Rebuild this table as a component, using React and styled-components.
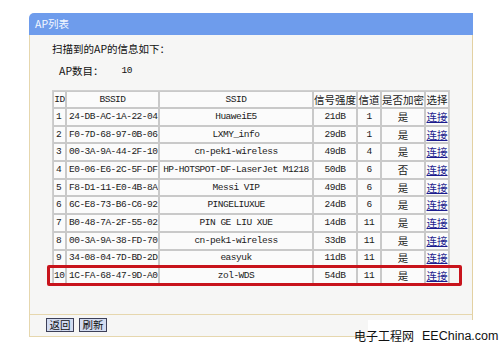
import React from "react";
import styled, { createGlobalStyle } from "styled-components";

const Global = createGlobalStyle`
  html, body { margin: 0; padding: 0; background: #ffffff; }
  body { width: 500px; height: 349px; overflow: hidden; }
`;

const CJK = `"Noto Sans CJK SC", "Noto Sans", sans-serif`;
const MONO = `"Liberation Mono", "Noto Sans CJK SC", monospace`;

const Page = styled.div`
  position: relative;
  width: 500px;
  height: 349px;
  padding: 13px 0 0 29px;
  box-sizing: border-box;
`;

const Panel = styled.div`
  width: 444px;
`;

const Header = styled.div`
  height: 22px;
  line-height: 22px;
  background: #6e9cec;
  color: #f4f8ff;
  font-family: ${CJK};
  font-size: 10.5px;
  padding-left: 6px;
  border-radius: 5px 0 0 0;
`;

const Body = styled.div`
  background: #f6f6f5;
  border-left: 1px solid #e6d7ae;
  border-right: 1px solid #e3d1a2;
  padding: 7px 0 28px 22px;
`;

const Line = styled.div`
  font-family: ${CJK};
  font-size: 10.5px;
  line-height: 14px;
  color: #111;
  padding-left: ${(p) => p.$indent || 0}px;
  margin-top: ${(p) => p.$top || 0}px;
  display: flex;
`;

const Count = styled.span`
  margin-left: 18px;
  font-family: ${MONO};
  font-size: 9.5px;
  letter-spacing: -0.5px;
`;

const TableWrap = styled.div`
  position: relative;
  margin-top: 12px;
  width: 396px;
`;

const Table = styled.table`
  width: 396px;
  table-layout: fixed;
  border-collapse: separate;
  border-spacing: 0;
  border: 1px solid #cfcfcf;
  background: #fbfbfb;
  box-sizing: border-box;
`;

const Th = styled.th`
  height: 15px;
  padding: 0;
  border: 1px solid #c9c9c9;
  font-family: ${(p) => (p.$mono ? MONO : CJK)};
  font-size: ${(p) => (p.$mono ? "9.5px" : "10.5px")};
  letter-spacing: ${(p) => (p.$mono ? "-0.5px" : "0")};
  font-weight: normal;
  color: #1a1a1a;
  text-align: center;
  white-space: nowrap;
  overflow: hidden;
`;

const Tr = styled.tr`
  height: 17.7px;
`;

const Td = styled.td`
  padding: 0 0 0 ${(p) => p.$pad || 0}px;
  border: 1px solid #c9c9c9;
  font-family: ${(p) => (p.$mono ? MONO : CJK)};
  font-size: ${(p) => (p.$mono ? "9.5px" : "10.5px")};
  letter-spacing: ${(p) => (p.$mono ? "-0.5px" : "0")};
  color: #1a1a1a;
  text-align: ${(p) => (p.$pad !== undefined ? "left" : "center")};
  white-space: nowrap;
  overflow: hidden;
  line-height: 14px;
`;

const Link = styled.a`
  color: #1c1c8e;
  text-decoration: underline;
  font-family: ${CJK};
  font-size: 10.5px;
`;

const Highlight = styled.div`
  position: absolute;
  left: -5px;
  top: 175px;
  width: 415px;
  height: 21px;
  border: 3px solid #c8141c;
  border-radius: 2px;
  box-sizing: border-box;
  pointer-events: none;
`;

const Footer = styled.div`
  display: flex;
  gap: 5px;
  align-items: center;
  height: 21px;
  padding-left: 16px;
  background: #f6f6f5;
  border-top: 1px solid #e6d7ae;
  border-bottom: 1px solid #e6d7ae;
  border-left: 1px solid #e6d7ae;
  border-right: 1px solid #e3d1a2;
`;

const Button = styled.button`
  height: 14px;
  width: 28px;
  padding: 0;
  background: #d3dcf1;
  border: 1px solid #3d4058;
  font-family: ${CJK};
  font-size: 10.5px;
  line-height: 12px;
  color: #111;
  display: flex;
  align-items: center;
  justify-content: center;
`;

const Watermark = styled.div`
  position: absolute;
  left: 354px;
  top: 329px;
  font-family: "Noto Sans CJK SC", "Liberation Sans", sans-serif;
  font-size: 12px;
  line-height: 14px;
  color: #111;
  white-space: nowrap;
  display: flex;
  gap: 8px;
`;

const Latin = styled.span`
  font-family: "Liberation Sans", sans-serif;
  font-size: 12.5px;
`;

const Patch = styled.div`
  position: absolute;
  left: ${(p) => p.$x}px;
  top: ${(p) => p.$y}px;
  width: ${(p) => p.$w}px;
  height: ${(p) => p.$h}px;
  background: #ffffff;
`;

const rows = [
  ["1", "24-DB-AC-1A-22-04", "HuaweiE5", "21dB", "1", "是"],
  ["2", "F0-7D-68-97-0B-06", "LXMY_info", "29dB", "1", "是"],
  ["3", "00-3A-9A-44-2F-10", "cn-pek1-wireless", "49dB", "4", "是"],
  ["4", "E0-06-E6-2C-5F-DF", "HP-HOTSPOT-DF-LaserJet M1218", "50dB", "6", "否"],
  ["5", "F8-D1-11-E0-4B-8A", "Messi VIP", "49dB", "6", "是"],
  ["6", "6C-E8-73-B6-C6-92", "PINGELIUXUE", "24dB", "6", "是"],
  ["7", "B0-48-7A-2F-55-02", "PIN GE LIU XUE", "14dB", "11", "是"],
  ["8", "00-3A-9A-38-FD-70", "cn-pek1-wireless", "33dB", "11", "是"],
  ["9", "34-08-04-7D-BD-2D", "easyuk", "11dB", "11", "是"],
  ["10", "1C-FA-68-47-9D-A0", "zol-WDS", "54dB", "11", "是"],
];

const widths = [13, 93, 154, 44, 24, 44, 24];

export default function App() {
  return (
    <>
      <Global />
      <Page>
        <Panel>
          <Header>AP列表</Header>
          <Body>
            <Line>扫描到的AP的信息如下：</Line>
            <Line $indent={7} $top={8}>
              AP数目：<Count>10</Count>
            </Line>
            <TableWrap>
              <Table>
                <colgroup>
                  {widths.map((w, i) => (
                    <col key={i} style={{ width: w }} />
                  ))}
                </colgroup>
                <thead>
                  <tr>
                    <Th $mono>ID</Th>
                    <Th $mono>BSSID</Th>
                    <Th $mono>SSID</Th>
                    <Th>信号强度</Th>
                    <Th>信道</Th>
                    <Th>是否加密</Th>
                    <Th>选择</Th>
                  </tr>
                </thead>
                <tbody>
                  {rows.map((r) => (
                    <Tr key={r[0]}>
                      <Td $mono $pad={r[0].length > 1 ? 0 : 2}>{r[0]}</Td>
                      <Td $mono $pad={2}>{r[1]}</Td>
                      <Td $mono>{r[2]}</Td>
                      <Td $mono>{r[3]}</Td>
                      <Td $mono>{r[4]}</Td>
                      <Td>{r[5]}</Td>
                      <Td>
                        <Link href="#">连接</Link>
                      </Td>
                    </Tr>
                  ))}
                </tbody>
              </Table>
              <Highlight />
            </TableWrap>
          </Body>
          <Footer>
            <Button>返回</Button>
            <Button>刷新</Button>
          </Footer>
        </Panel>
        <Patch $x={368} $y={320} $w={106} $h={20} />
        <Watermark>
          <span>电子工程网</span>
          <Latin>EEChina.com</Latin>
        </Watermark>
      </Page>
    </>
  );
}
